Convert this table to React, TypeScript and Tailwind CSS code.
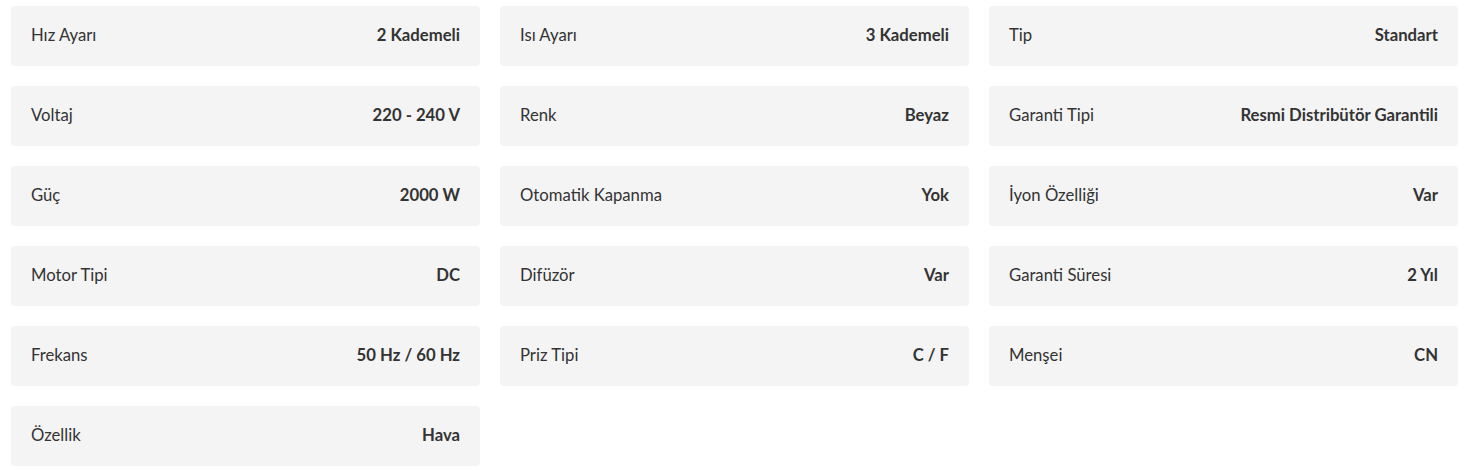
const specs = [
    ["Hız Ayarı", "2 Kademeli"],
    ["Isı Ayarı", "3 Kademeli"],
    ["Tip", "Standart"],
    ["Voltaj", "220 - 240 V"],
    ["Renk", "Beyaz"],
    ["Garanti Tipi", "Resmi Distribütör Garantili"],
    ["Güç", "2000 W"],
    ["Otomatik Kapanma", "Yok"],
    ["İyon Özelliği", "Var"],
    ["Motor Tipi", "DC"],
    ["Difüzör", "Var"],
    ["Garanti Süresi", "2 Yıl"],
    ["Frekans", "50 Hz / 60 Hz"],
    ["Priz Tipi", "C / F"],
    ["Menşei", "CN"],
    ["Özellik", "Hava"],
]

const App = () => {
    return (
        <div className="min-h-[476px] bg-white pt-[6px] pl-[11px] font-['Lato',sans-serif] text-[16.7px] text-[#333]">
            <div className="grid w-[1447px] grid-cols-3 gap-5">
                {specs.map(([label, value]) => (
                    <div
                        key={label}
                        className="flex h-[60px] items-center justify-between rounded bg-[#f4f4f4] px-5"
                    >
                        <span>{label}</span>
                        <span className="font-bold">{value}</span>
                    </div>
                ))}
            </div>
        </div>
    )
}

export default App
